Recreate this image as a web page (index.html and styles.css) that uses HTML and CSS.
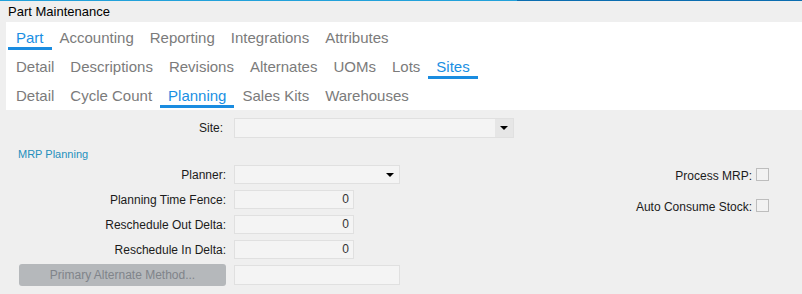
FILE: index.html
```html
<!DOCTYPE html>
<html lang="en">
<head>
  <meta charset="UTF-8">
  <meta name="viewport" content="width=device-width, initial-scale=1.0">
  <title>Part Maintenance</title>
  <link rel="stylesheet" href="styles.css">
</head>
<body>
  <div class="window">
    <div class="topline"></div>
    <div class="title">Part Maintenance</div>

    <div class="tabs">
      <div class="tab-row">
        <span class="tab active">Part</span>
        <span class="tab">Accounting</span>
        <span class="tab">Reporting</span>
        <span class="tab">Integrations</span>
        <span class="tab">Attributes</span>
      </div>
      <div class="tab-row">
        <span class="tab">Detail</span>
        <span class="tab">Descriptions</span>
        <span class="tab">Revisions</span>
        <span class="tab">Alternates</span>
        <span class="tab">UOMs</span>
        <span class="tab">Lots</span>
        <span class="tab active">Sites</span>
      </div>
      <div class="tab-row">
        <span class="tab">Detail</span>
        <span class="tab">Cycle Count</span>
        <span class="tab active">Planning</span>
        <span class="tab">Sales Kits</span>
        <span class="tab">Warehouses</span>
      </div>
    </div>

    <div class="form">
      <div class="field">
        <label class="label site-label">Site:</label>
        <div class="combo combo-site">
          <span class="combo-btn"><i class="arrow"></i></span>
        </div>
      </div>

      <div class="group-title">MRP Planning</div>

      <div class="planning">
        <div class="fields">
          <div class="field">
            <label class="label">Planner:</label>
            <div class="combo combo-planner">
              <span class="combo-btn plain"><i class="arrow"></i></span>
            </div>
          </div>
          <div class="field">
            <label class="label">Planning Time Fence:</label>
            <div class="num">0</div>
          </div>
          <div class="field">
            <label class="label">Reschedule Out Delta:</label>
            <div class="num">0</div>
          </div>
          <div class="field">
            <label class="label">Reschedule In Delta:</label>
            <div class="num">0</div>
          </div>
          <div class="field btn-field">
            <button class="btn" disabled>Primary Alternate Method...</button>
            <div class="text-box"></div>
          </div>
        </div>

        <div class="flags">
          <div class="flag">
            <span class="flag-label">Process MRP:</span>
            <span class="check"></span>
          </div>
          <div class="flag">
            <span class="flag-label">Auto Consume Stock:</span>
            <span class="check"></span>
          </div>
        </div>
      </div>
    </div>
  </div>
</body>
</html>
```

FILE: styles.css
```css
* {
  box-sizing: border-box;
}
body {
  margin: 0;
  background-color: #efefef;
  font-family: "Liberation Sans", Arial, sans-serif;
  color: #1b1b1b;
}
.topline {
  height: 1px;
  background: linear-gradient(to right, #22a1da 0, #22a1da 517px, #0b6db0 517px);
}
.title {
  height: 21px;
  line-height: 21px;
  padding-left: 8px;
  font-size: 13px;
  color: #000;
}

/* tabs */
.tabs {
  margin-left: 6px;
  padding-left: 2px;
  height: 88px;
  background-color: #fff;
}
.tab-row {
  display: flex;
  height: 29px;
}
.tab {
  height: 28px;
  padding: 7px 8px 0;
  line-height: 18px;
  font-size: 15px;
  color: #7b7b7b;
  border-bottom: 3px solid transparent;
  white-space: nowrap;
}
.tab.active {
  color: #1a8fe3;
  border-bottom-color: #1a8ce0;
}

/* form */
.form {
  padding: 8px 0 0 12px;
}
.field {
  display: grid;
  grid-template-columns: 214px auto;
  column-gap: 8px;
  align-items: center;
}
.label {
  text-align: right;
  font-size: 12px;
  line-height: 14px;
  white-space: nowrap;
}
.site-label {
  padding-right: 3px;
}
.combo {
  display: flex;
  justify-content: flex-end;
  height: 20px;
  background-color: #f4f4f4;
  border: 1px solid #e0e0e0;
}
.combo-site {
  width: 280px;
}
.combo-planner {
  width: 166px;
  height: 19px;
}
.combo-btn {
  display: flex;
  align-items: center;
  justify-content: center;
  width: 18px;
  background-color: #e6e6e6;
}
.combo-btn.plain {
  background-color: transparent;
}
.arrow {
  width: 0;
  height: 0;
  border-left: 4px solid transparent;
  border-right: 4px solid transparent;
  border-top: 4px solid #000;
}
.group-title {
  margin: 10px 0 0 6px;
  font-size: 11px;
  line-height: 13px;
  color: #2590bd;
}
.planning {
  display: flex;
  justify-content: space-between;
  margin-top: 4px;
  padding-right: 33px;
}
.fields {
  display: flex;
  flex-direction: column;
  gap: 6px;
}
.num {
  width: 120px;
  height: 19px;
  padding-right: 4px;
  text-align: right;
  font-size: 12px;
  line-height: 17px;
  color: #333;
  background-color: #f4f4f4;
  border: 1px solid #e0e0e0;
}
.btn-field {
  margin-top: -1px;
}
.btn {
  justify-self: end;
  width: 207px;
  height: 22px;
  padding: 0;
  border: none;
  border-radius: 3px;
  background-color: #b5b8bb;
  color: #80848a;
  font-family: inherit;
  font-size: 12px;
}
.text-box {
  width: 166px;
  height: 20px;
  background-color: #f4f4f4;
  border: 1px solid #e0e0e0;
}

/* checkboxes */
.flags {
  display: flex;
  flex-direction: column;
  align-items: flex-end;
  gap: 16px;
  margin-top: 3px;
}
.flag {
  display: flex;
  align-items: flex-start;
  gap: 4px;
}
.flag-label {
  padding-top: 2px;
  font-size: 12px;
  line-height: 13px;
}
.check {
  width: 13px;
  height: 13px;
  background-color: #f2f2f2;
  border: 1px solid #bdbdbd;
}
```
